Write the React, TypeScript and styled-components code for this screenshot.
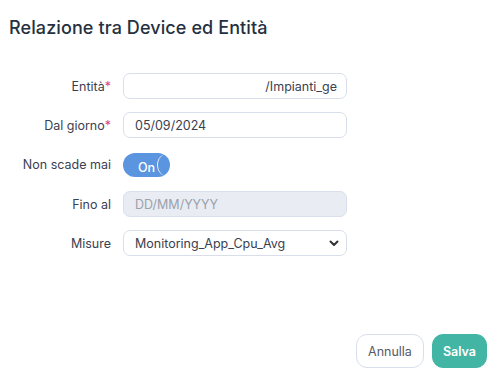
import styled, { createGlobalStyle } from "styled-components";

const GlobalStyle = createGlobalStyle`
	body {
		margin: 0;
		background: #ffffff;
		font-family: "Inter", "Noto Sans", sans-serif;
	}
`;

const Modal = styled.div`
	width: 497px;
	height: 380px;
	box-sizing: border-box;
	display: flex;
	flex-direction: column;
	background: #fff;
`;

const Title = styled.h2`
	margin: 0;
	padding: 17px 9px 0;
	font-size: 18px;
	font-weight: 500;
	color: #253041;
	line-height: 22px;
	letter-spacing: 0.1px;
`;

const Form = styled.div`
	display: grid;
	grid-template-columns: 111px 224px;
	column-gap: 12px;
	row-gap: 13px;
	padding: 34px 0 0 0;
	align-items: center;
`;

const Label = styled.label`
	text-align: right;
	font-size: 12.5px;
	color: #3a4150;
`;

const Star = styled.span`
	color: #e0436b;
`;

const Input = styled.div<{ $disabled?: boolean; $align?: string }>`
	height: 26px;
	box-sizing: border-box;
	border: 1px solid #d8dfea;
	border-radius: 7px;
	background: ${(p) => (p.$disabled ? "#e9edf3" : "#fff")};
	display: flex;
	align-items: center;
	justify-content: ${(p) => p.$align || "flex-start"};
	padding: 0 9px 0 11px;
	font-size: 12.5px;
	color: ${(p) => (p.$disabled ? "#9aa1ad" : "#3a4150")};
	overflow: hidden;
	white-space: nowrap;
`;

const Select = styled(Input)`
	justify-content: space-between;
	padding-right: 7px;
`;

const Toggle = styled.div`
	width: 47px;
	height: 24px;
	margin: 2px 0 1px;
	border-radius: 12px;
	background: #5b95e0;
	position: relative;
	overflow: hidden;
	display: flex;
	align-items: center;
	padding: 4px 0 0 15px;
	box-sizing: border-box;
	color: #fff;
	font-size: 12.5px;
	font-weight: 500;
`;

const Knob = styled.span`
	position: absolute;
	left: 34px;
	top: 0;
	width: 24px;
	height: 24px;
	border-radius: 50%;
	border-left: 1.5px solid #e8f0fb;
	box-sizing: border-box;
`;

const Footer = styled.div`
	margin-top: auto;
	display: flex;
	justify-content: flex-end;
	gap: 8px;
	padding: 0 10px 12px 0;
`;

const Button = styled.button<{ $primary?: boolean }>`
	height: 34px;
	padding: 0 ${(p) => (p.$primary ? "10px" : "11px")};
	border-radius: 11px;
	font-family: inherit;
	font-size: 12.5px;
	font-weight: ${(p) => (p.$primary ? 600 : 400)};
	background: ${(p) => (p.$primary ? "#42b5a5" : "#fff")};
	color: ${(p) => (p.$primary ? "#fff" : "#555b66")};
	border: 1px solid ${(p) => (p.$primary ? "#42b5a5" : "#d8dfea")};
	cursor: pointer;
`;

const Chevron = () => (
	<svg width="10" height="7" viewBox="0 0 10 7">
		<path d="M1.5 1.5 L5 5 L8.5 1.5" fill="none" stroke="#333" strokeWidth="2" strokeLinecap="round" strokeLinejoin="round" />
	</svg>
);

export default function App() {
	return (
		<>
			<GlobalStyle />
			<Modal>
				<Title>Relazione tra Device ed Entità</Title>
				<Form>
					<Label>
						Entità<Star>*</Star>
					</Label>
					<Input $align="flex-end">/Impianti_ge</Input>
					<Label>
						Dal giorno<Star>*</Star>
					</Label>
					<Input>05/09/2024</Input>
					<Label>Non scade mai</Label>
					<Toggle>
						On
						<Knob />
					</Toggle>
					<Label>Fino al</Label>
					<Input $disabled>DD/MM/YYYY</Input>
					<Label>Misure</Label>
					<Select>
						Monitoring_App_Cpu_Avg
						<Chevron />
					</Select>
				</Form>
				<Footer>
					<Button>Annulla</Button>
					<Button $primary>Salva</Button>
				</Footer>
			</Modal>
		</>
	);
}
